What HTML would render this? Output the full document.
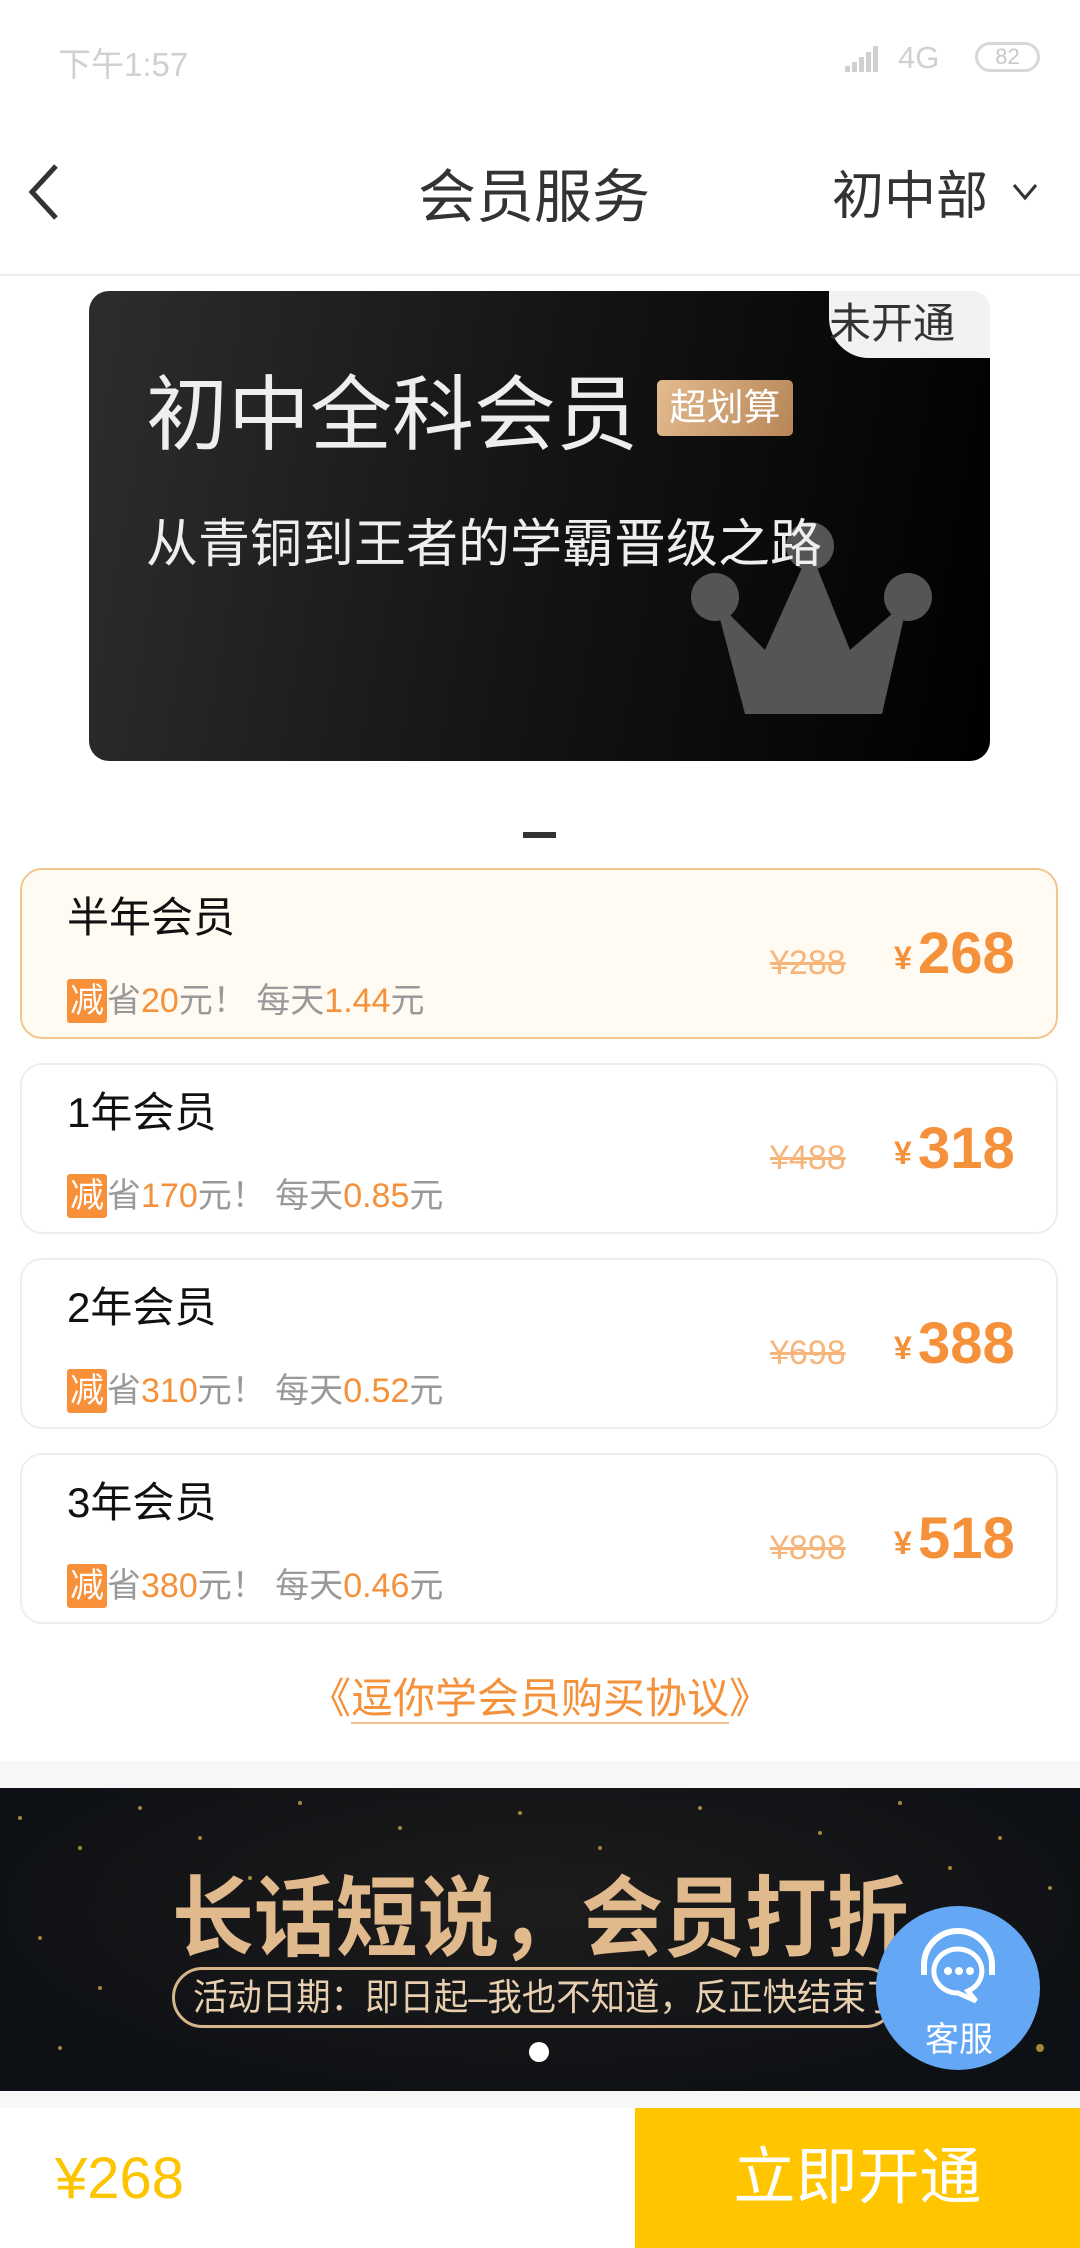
<!DOCTYPE html>
<html><head><meta charset="utf-8"><style>
*{margin:0;padding:0;box-sizing:border-box}
body{width:1080px;height:2248px;background:#fff;font-family:"Liberation Sans","Noto Sans CJK SC",sans-serif;position:relative;overflow:hidden}
.a{position:absolute;white-space:nowrap}
.opt{position:absolute;left:20px;width:1038px;height:171px;border:2px solid #eeeeee;border-radius:22px;background:#fff}
.opt .l{position:absolute;left:45px;top:14px;font-size:42px;color:#111}
.opt .s{position:absolute;left:45px;top:109px;font-size:34px;color:#999;line-height:44px}
.opt .s b{font-weight:normal;background:#f8903a;color:#fff;display:inline-block;width:40px;text-align:center;border-radius:3px}
.opt .s i{font-style:normal;color:#f5913a}
.opt .o{position:absolute;left:748px;top:74px;font-size:34px;color:#f6b57a;text-decoration:line-through}
.opt .y{position:absolute;left:872px;top:70px;font-size:32px;color:#f5913a;font-weight:bold}
.opt .p{position:absolute;left:896px;top:50px;font-size:58px;color:#f5913a;font-weight:bold}
</style></head><body>
<div class="a" style="left:58px;top:38px;font-size:33px;color:#d0d0d0">下午1:57</div>
<svg class="a" style="left:845px;top:44px" width="40" height="30"><g fill="#d0d0d0"><rect x="0" y="22" width="5" height="6"/><rect x="7" y="18" width="5" height="10"/><rect x="14" y="13" width="5" height="15"/><rect x="21" y="8" width="5" height="20"/><rect x="28" y="2" width="5" height="26"/></g></svg>
<div class="a" style="left:898px;top:40px;font-size:31px;color:#d0d0d0">4G</div>
<div class="a" style="left:975px;top:42px;width:65px;height:30px;border:3px solid #d8d8d8;border-radius:15px;font-size:22px;color:#c8c8c8;text-align:center;line-height:24px">82</div>
<svg class="a" style="left:26px;top:162px" width="36" height="60"><path d="M30 4 L6 30 L30 56" stroke="#333" stroke-width="5" fill="none"/></svg>
<div class="a" style="left:418px;top:150px;font-size:58px;color:#333">会员服务</div>
<div class="a" style="left:832px;top:154px;font-size:52px;color:#333">初中部</div>
<svg class="a" style="left:1012px;top:182px" width="26" height="20"><path d="M2 3 L13 16 L24 3" stroke="#333" stroke-width="3" fill="none"/></svg>
<div class="a" style="left:0;top:274px;width:1080px;height:2px;background:#eee"></div>
<div class="a" style="left:89px;top:291px;width:901px;height:470px;border-radius:20px;background:linear-gradient(100deg,#2d2d2d 0%,#141414 50%,#000 100%)"></div>
<div class="a" style="left:829px;top:291px;width:161px;height:67px;background:#f2f2f2;border-radius:0 18px 0 40px;font-size:42px;color:#333;line-height:66px">未开通</div>
<div class="a" style="left:146px;top:348px;font-size:82px;color:#eee">初中全科会员</div>
<div class="a" style="left:657px;top:380px;width:136px;height:56px;border-radius:5px;background:linear-gradient(110deg,#e2bb8f,#b88656);font-size:37px;color:#fff;text-align:center;line-height:56px">超划算</div>
<svg class="a" style="left:690px;top:520px" width="245" height="200"><g fill="#555"><circle cx="25" cy="77" r="24"/><circle cx="120" cy="26" r="24"/><circle cx="218" cy="77" r="24"/><path d="M25 80 L75 130 L120 30 L160 130 L218 80 L192 194 L55 194Z"/></g></svg>
<div class="a" style="left:146px;top:502px;font-size:52px;color:#eee">从青铜到王者的学霸晋级之路</div>
<div class="a" style="left:523px;top:832px;width:33px;height:6px;background:#333"></div>
<div class="opt" style="top:868px;background:#fffaf2;border-color:#f2c58c"><div class="l">半年会员</div><div class="s"><b>减</b>省<i>20</i>元！ 每天<i>1.44</i>元</div><div class="o">¥288</div><div class="y">¥</div><div class="p">268</div></div>
<div class="opt" style="top:1063px"><div class="l">1年会员</div><div class="s"><b>减</b>省<i>170</i>元！ 每天<i>0.85</i>元</div><div class="o">¥488</div><div class="y">¥</div><div class="p">318</div></div>
<div class="opt" style="top:1258px"><div class="l">2年会员</div><div class="s"><b>减</b>省<i>310</i>元！ 每天<i>0.52</i>元</div><div class="o">¥698</div><div class="y">¥</div><div class="p">388</div></div>
<div class="opt" style="top:1453px"><div class="l">3年会员</div><div class="s"><b>减</b>省<i>380</i>元！ 每天<i>0.46</i>元</div><div class="o">¥898</div><div class="y">¥</div><div class="p">518</div></div>
<div class="a" style="left:0;top:1665px;width:1080px;text-align:center;font-size:42px;color:#f5913a">《<span style="border-bottom:2px solid #f5c090">逗你学会员购买协议</span>》</div>
<div class="a" style="left:0;top:1761px;width:1080px;height:27px;background:#f7f7f7"></div>
<div class="a" style="left:0;top:1788px;width:1080px;height:303px;background:radial-gradient(ellipse at 50% 40%,#1e1c1c,#0d1014 80%)"></div>
<svg class="a" style="left:0;top:1788px" width="1080" height="303"><g fill="#c9a640" opacity=".8"><circle cx="20" cy="30" r="2"/><circle cx="80" cy="60" r="2"/><circle cx="140" cy="20" r="2"/><circle cx="200" cy="50" r="2"/><circle cx="300" cy="15" r="2"/><circle cx="400" cy="40" r="2"/><circle cx="520" cy="25" r="2"/><circle cx="600" cy="60" r="2"/><circle cx="700" cy="20" r="2"/><circle cx="820" cy="45" r="2"/><circle cx="900" cy="15" r="2"/><circle cx="1000" cy="50" r="2"/><circle cx="1050" cy="100" r="2"/><circle cx="40" cy="150" r="2"/><circle cx="100" cy="200" r="2"/><circle cx="60" cy="260" r="2"/><circle cx="1040" cy="260" r="4"/><circle cx="950" cy="80" r="2"/><circle cx="250" cy="90" r="2"/></g></svg>
<div class="a" style="left:172px;top:1848px;font-size:88px;font-weight:bold;color:#e0b98c;transform:scaleX(0.93);transform-origin:0 0">长话短说，会员打折</div>
<div class="a" style="left:172px;top:1967px;width:724px;height:61px;border:3px solid #d8b48a;border-radius:31px;font-size:37px;color:#e8cfb0;line-height:55px;padding-left:18px"><span style="display:inline-block;transform:scaleX(0.93);transform-origin:0 0">活动日期：即日起–我也不知道，反正快结束了</span></div>
<div class="a" style="left:529px;top:2042px;width:20px;height:20px;border-radius:50%;background:#fff"></div>
<div class="a" style="left:876px;top:1906px;width:164px;height:164px;border-radius:50%;background:#64a8f5"></div>
<svg class="a" style="left:912px;top:1925px" width="92" height="90"><path d="M12 50 V40 A34 34 0 0 1 80 40 V50" stroke="#fff" stroke-width="6" fill="none"/><path d="M22 44 A24 22 0 1 1 56 66 L64 76 L46 68 A24 22 0 0 1 22 44Z" stroke="#fff" stroke-width="5" fill="none"/><circle cx="36" cy="46" r="4" fill="#fff"/><circle cx="47" cy="46" r="4" fill="#fff"/><circle cx="58" cy="46" r="4" fill="#fff"/></svg>
<div class="a" style="left:925px;top:2012px;font-size:34px;color:#fff">客服</div>
<div class="a" style="left:0;top:2091px;width:1080px;height:17px;background:#f7f7f7"></div>
<div class="a" style="left:55px;top:2145px;font-size:58px;color:#fdc400">¥268</div>
<div class="a" style="left:635px;top:2108px;width:445px;height:140px;background:#ffc600;color:#fff;font-size:62px;text-align:center;line-height:140px">立即开通</div>
</body></html>
